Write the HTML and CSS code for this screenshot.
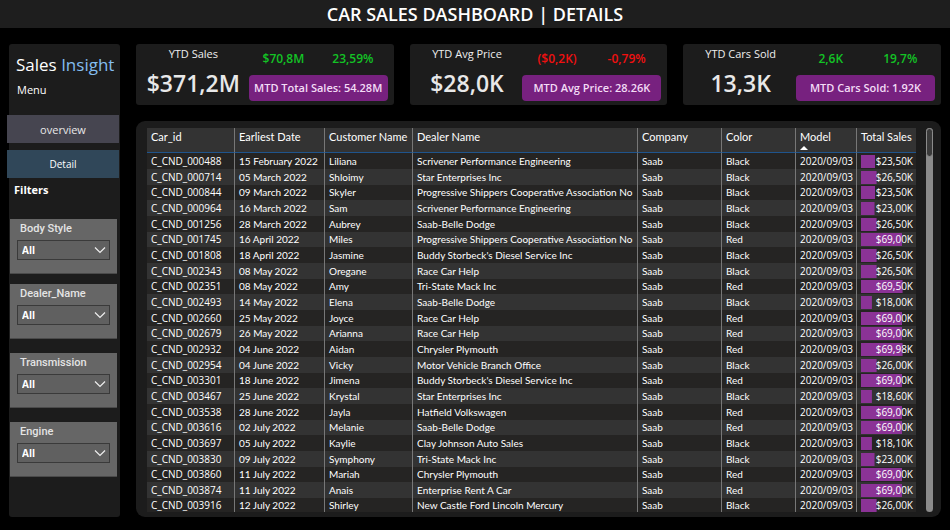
FILE: index.html
```html
<!DOCTYPE html>
<html lang="en">
<head>
<meta charset="utf-8">
<title>Car Sales Dashboard | Details</title>
<link rel="stylesheet" href="styles.css">
</head>
<body>
<header class="topbar"><h1>CAR SALES DASHBOARD | DETAILS</h1></header>
<div class="layout">
  <aside class="sidebar">
    <p class="brand">Sales <span class="brand-accent">Insight</span></p>
    <p class="menu-title">Menu</p>
    <nav class="menu">
      <button class="menu-button" type="button">overview</button>
      <button class="menu-button menu-button-active" type="button">Detail</button>
    </nav>
    <h2 class="filters-title">Filters</h2>
    <div class="filters">
      <div class="filter-group">
        <div class="filter">
          <label for="body-style">Body Style</label>
          <div class="select-box">
            <select id="body-style"><option>All</option></select>
            <svg class="chevron" viewBox="0 0 12 8" aria-hidden="true"><path d="M1 1.5 6 6.5 11 1.5"/></svg>
          </div>
        </div>
        <div class="filter">
          <label for="dealer-name">Dealer_Name</label>
          <div class="select-box">
            <select id="dealer-name"><option>All</option></select>
            <svg class="chevron" viewBox="0 0 12 8" aria-hidden="true"><path d="M1 1.5 6 6.5 11 1.5"/></svg>
          </div>
        </div>
      </div>
      <div class="filter">
        <label for="transmission">Transmission</label>
        <div class="select-box">
          <select id="transmission"><option>All</option></select>
          <svg class="chevron" viewBox="0 0 12 8" aria-hidden="true"><path d="M1 1.5 6 6.5 11 1.5"/></svg>
        </div>
      </div>
      <div class="filter">
        <label for="engine">Engine</label>
        <div class="select-box">
          <select id="engine"><option>All</option></select>
          <svg class="chevron" viewBox="0 0 12 8" aria-hidden="true"><path d="M1 1.5 6 6.5 11 1.5"/></svg>
        </div>
      </div>
    </div>
  </aside>
  <main class="content">
    <section class="cards">
      <article class="card">
        <div class="total"><h3>YTD Sales</h3><p class="total-value">$371,2M</p></div>
        <div class="detail">
          <div class="changes up"><span>$70,8M</span><span>23,59%</span></div>
          <p class="mtd">MTD Total Sales: 54.28M</p>
        </div>
      </article>
      <article class="card">
        <div class="total"><h3>YTD Avg Price</h3><p class="total-value">$28,0K</p></div>
        <div class="detail">
          <div class="changes down"><span>($0,2K)</span><span>-0,79%</span></div>
          <p class="mtd">MTD Avg Price: 28.26K</p>
        </div>
      </article>
      <article class="card">
        <div class="total"><h3>YTD Cars Sold</h3><p class="total-value">13,3K</p></div>
        <div class="detail">
          <div class="changes up"><span>2,6K</span><span>19,7%</span></div>
          <p class="mtd">MTD Cars Sold: 1.92K</p>
        </div>
      </article>
    </section>
    <section class="panel">
      <div class="table-view">
        <table class="sales">
          <colgroup>
            <col class="c-id"><col class="c-date"><col class="c-customer"><col class="c-dealer"><col class="c-company"><col class="c-color"><col class="c-model"><col class="c-total">
          </colgroup>
          <thead>
            <tr><th>Car_id</th><th>Earliest Date</th><th>Customer Name</th><th>Dealer Name</th><th>Company</th><th>Color</th><th>Model<svg class="sort" viewBox="0 0 8 4" aria-hidden="true"><path d="M0 4 4 0 8 4Z"/></svg></th><th>Total Sales</th></tr>
          </thead>
          <tbody id="rows"></tbody>
        </table>
      </div>
      <div class="scroll-track"><div class="scroll-thumb"></div></div>
    </section>
  </main>
</div>
<script src="table.js"></script>
</body>
</html>
```
FILE: styles.css
```css
* { box-sizing: border-box; }
body, h1, h2, h3, p { margin: 0; }
body {
  display: flex;
  flex-direction: column;
  min-height: 100vh;
  background: #000;
  color: #fff;
  font-family: "Open Sans", "Noto Sans", sans-serif;
  font-size: 10px;
}
button, select { font-family: inherit; color: inherit; }

.topbar { height: 28px; background: #1e1e1e; text-align: center; }
.topbar h1 { font-size: 18px; line-height: 28px; font-weight: 600; }

.layout { flex: 1; display: flex; gap: 16px; padding: 16px 9px 13px; }

.sidebar {
  width: 111px;
  flex: none;
  padding-top: 8px;
  background: #1c1c1c;
  border-radius: 3px;
}
.brand { padding-left: 7px; font-size: 17px; line-height: 26px; white-space: nowrap; }
.brand-accent { color: #83bdf0; }
.menu-title { padding-left: 8px; font-size: 11px; line-height: 24px; }
.menu { display: flex; flex-direction: column; gap: 7px; margin: 13px 1px 0 -2px; }
.menu-button {
  height: 28px;
  padding: 0;
  border: 0;
  background: #464550;
  font-size: 11px;
  color: #e8e8e8;
}
.menu-button-active { background: #304759; font-size: 10px; color: #fff; }
.filters-title { padding-left: 5px; font-size: 11px; line-height: 24px; font-weight: 700; }
.filters { display: flex; flex-direction: column; gap: 14px; padding: 17px 3px 0 1px; }
.filter-group { display: flex; flex-direction: column; gap: 10px; }
.filter {
  display: flex;
  flex-direction: column;
  gap: 2px;
  height: 55px;
  padding: 0 7px;
  background: #666;
  border-bottom: 1px solid #4a4a4a;
}
.filter label {
  padding-left: 3px;
  font-family: Roboto, sans-serif;
  font-size: 11px;
  line-height: 19px;
  font-weight: 500;
  color: #e4e4e4;
}
.select-box { display: grid; align-items: center; }
.select-box select, .chevron { grid-area: 1 / 1; }
.select-box select {
  appearance: none;
  width: 100%;
  height: 20px;
  padding: 0 4px;
  border: 1px solid #3a3a3a;
  border-radius: 0;
  background: #606060;
  font-size: 10px;
  font-weight: 700;
}
.chevron {
  justify-self: end;
  width: 12px;
  height: 8px;
  margin-right: 4px;
  fill: none;
  stroke: #eee;
  stroke-width: 1.2;
  pointer-events: none;
}

.content { flex: 1; min-width: 0; display: flex; flex-direction: column; gap: 16px; }
.cards { display: grid; grid-template-columns: repeat(3, 1fr); gap: 16px; }
.card {
  display: flex;
  gap: 8px;
  height: 61px;
  padding: 0 6px 0 10px;
  background: #1c1c1c;
  border-radius: 3px;
}
.total { flex: 1; min-width: 0; text-align: center; }
.total h3 { padding-top: 1px; font-size: 11px; line-height: 18px; font-weight: 400; color: #eee; }
.total-value { font-size: 23px; line-height: 40px; font-weight: 600; color: #e8e8e8; white-space: nowrap; }
.detail { width: 139px; display: flex; flex-direction: column; gap: 6px; padding-top: 5px; }
.changes { display: grid; grid-template-columns: 1fr 1fr; font-size: 12px; line-height: 20px; font-weight: 600; text-align: center; }
.up { color: #13c325; }
.down { color: #f01010; }
.mtd {
  border-radius: 4px;
  background: #77217f;
  font-size: 11px;
  line-height: 26px;
  font-weight: 600;
  text-align: center;
  color: #f3dcf6;
  white-space: nowrap;
}

.panel {
  flex: 1;
  display: flex;
  gap: 10px;
  padding: 7px 8px 5px 11px;
  background: #1c1c1c;
  border-radius: 9px;
}
.table-view { flex: 1; min-width: 0; overflow: hidden; }
.sales { width: 100%; table-layout: fixed; border-collapse: separate; border-spacing: 0; font-family: Lato, "Open Sans", sans-serif; }
.c-id, .c-customer { width: 88px; }
.c-date { width: 90px; }
.c-dealer { width: 225px; }
.c-company { width: 84px; }
.c-color { width: 74px; }
.c-model { width: 61px; }
.c-total { width: 60px; }
.sales th, .sales td {
  padding: 0 0 0 4px;
  border-right: 1px solid #777;
  text-align: left;
  white-space: nowrap;
}
.sales th:last-child, .sales td:last-child { border-right: 0; padding-right: 4px; }
.sales th {
  height: 25px;
  vertical-align: top;
  background: #333;
  border-bottom: 1px solid #1f548c;
  font-size: 11px;
  line-height: 18px;
  font-weight: 400;
}
.sort { display: block; width: 8px; height: 4px; fill: #fff; }
.sales td { font-size: 10px; line-height: 16px; background: #252423; }
.sales .code { font-family: "Open Sans", "Noto Sans", sans-serif; }
.sales tbody tr:nth-child(even) td { background: #333; }
.sales tbody tr:nth-child(3n) td { line-height: 15px; }
.sales tbody tr:last-child td { line-height: 14px; }
.bar {
  background: linear-gradient(#8b3396, #8b3396) no-repeat left center / var(--share) 13px;
  text-align: right;
}
.scroll-track { width: 7px; border-radius: 4px; background: #8b8b8b; }
.scroll-thumb { height: 29px; border: 1px solid #8b8b8b; border-radius: 4px; background: #3a3a3a; }
```
FILE: table.js
```js
// id, date, customer, dealer, color, total sales in thousands
const sales = [
  ["000488", "15 February 2022", "Liliana", "Scrivener Performance Engineering", "Black", 23.5],
  ["000714", "05 March 2022", "Shloimy", "Star Enterprises Inc", "Black", 26.5],
  ["000844", "09 March 2022", "Skyler", "Progressive Shippers Cooperative Association No", "Black", 23.5],
  ["000964", "16 March 2022", "Sam", "Scrivener Performance Engineering", "Black", 23],
  ["001256", "28 March 2022", "Aubrey", "Saab-Belle Dodge", "Black", 26.5],
  ["001745", "16 April 2022", "Miles", "Progressive Shippers Cooperative Association No", "Red", 69],
  ["001808", "18 April 2022", "Jasmine", "Buddy Storbeck's Diesel Service Inc", "Black", 26.5],
  ["002343", "08 May 2022", "Oregane", "Race Car Help", "Black", 26.5],
  ["002351", "08 May 2022", "Amy", "Tri-State Mack Inc", "Red", 69.5],
  ["002493", "14 May 2022", "Elena", "Saab-Belle Dodge", "Black", 18],
  ["002660", "25 May 2022", "Joyce", "Race Car Help", "Red", 69],
  ["002679", "26 May 2022", "Arianna", "Race Car Help", "Red", 69],
  ["002932", "04 June 2022", "Aidan", "Chrysler Plymouth", "Red", 69.98],
  ["002954", "04 June 2022", "Vicky", "Motor Vehicle Branch Office", "Black", 26],
  ["003301", "18 June 2022", "Jimena", "Buddy Storbeck's Diesel Service Inc", "Red", 69],
  ["003467", "25 June 2022", "Krystal", "Star Enterprises Inc", "Black", 18.6],
  ["003538", "28 June 2022", "Jayla", "Hatfield Volkswagen", "Red", 69],
  ["003616", "02 July 2022", "Melanie", "Saab-Belle Dodge", "Red", 69],
  ["003697", "05 July 2022", "Kaylie", "Clay Johnson Auto Sales", "Black", 18.1],
  ["003830", "09 July 2022", "Symphony", "Tri-State Mack Inc", "Black", 23],
  ["003860", "11 July 2022", "Mariah", "Chrysler Plymouth", "Red", 69],
  ["003874", "11 July 2022", "Anais", "Enterprise Rent A Car", "Red", 69],
  ["003916", "12 July 2022", "Shirley", "New Castle Ford Lincoln Mercury", "Black", 26]
];
const scaleMax = 87;

document.getElementById("rows").innerHTML = sales.map(([id, date, customer, dealer, color, total]) => {
  const share = Math.round(total / scaleMax * 100);
  const amount = "$" + total.toFixed(2).replace(".", ",") + "K";
  return `<tr><td class="code">C_CND_${id}</td><td>${date}</td><td>${customer}</td><td>${dealer}</td><td>Saab</td><td>${color}</td><td class="code">2020/09/03</td><td class="code"><div class="bar" style="--share: ${share}%">${amount}</div></td></tr>`;
}).join("");
```
